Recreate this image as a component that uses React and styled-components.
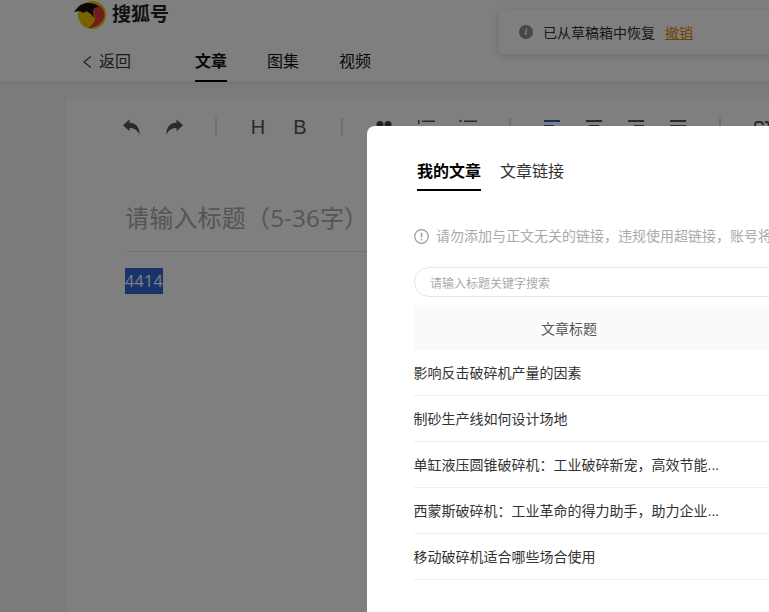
import styled, { createGlobalStyle } from "styled-components";

const Global = createGlobalStyle`
  html, body {
    margin: 0;
    height: 100%;
    overflow: hidden;
    font-family: "Liberation Sans", Arial, "Noto Sans CJK SC", sans-serif;
  }
  #root { height: 100%; }
`;

const Page = styled.div`
  position: relative;
  width: 769px;
  height: 612px;
  overflow: hidden;
  background: #f7f7f7;
`;

const Header = styled.header`
  height: 82px;
  background: #fff;
  border-bottom: 1px solid #f0f0f0;
  box-shadow: 0 2px 8px rgba(0, 0, 0, 0.05);
  box-sizing: border-box;
  padding-left: 74px;
`;

const Logo = styled.div`
  display: flex;
  align-items: center;
  gap: 5px;
  height: 30px;
`;

const LogoText = styled.span`
  font-size: 19px;
  line-height: 30px;
  font-weight: 700;
  color: #222;
`;

const Nav = styled.nav`
  display: flex;
  align-items: flex-start;
  margin-top: 20px;
  padding-left: 9px;
`;

const Back = styled.span`
  display: flex;
  align-items: center;
  gap: 7px;
  width: 112px;
  font-size: 16px;
  line-height: 24px;
  color: #333;
`;

const NavItem = styled.span`
  box-sizing: border-box;
  height: 32px;
  margin-right: 40px;
  font-size: 16px;
  line-height: 24px;
  color: #111;
  font-weight: ${(p) => (p.$active ? 700 : 400)};
  border-bottom: ${(p) => (p.$active ? "2px solid #000" : "none")};
`;

const Toast = styled.div`
  position: absolute;
  top: 10px;
  left: 499px;
  width: 320px;
  height: 44px;
  display: flex;
  align-items: center;
  padding-left: 20px;
  gap: 10px;
  background: #fff;
  border-radius: 4px;
  box-shadow: 0 2px 8px rgba(0, 0, 0, 0.15);
  font-size: 14px;
  color: #333;
`;

const ToastIcon = styled.span`
  width: 14px;
  height: 14px;
  border-radius: 50%;
  background: #8b8f9c;
  color: #fff;
  font: italic 700 10px/14px "Liberation Serif", serif;
  text-align: center;
`;

const Undo = styled.span`
  color: #e08a00;
  text-decoration: underline;
`;

const Editor = styled.main`
  box-sizing: border-box;
  width: 860px;
  height: 520px;
  margin: 16px 0 0 65px;
  background: #fff;
  border-left: 1px solid #f3f3f3;
  border-top: 1px solid #f3f3f3;
`;

const Toolbar = styled.div`
  display: flex;
  align-items: center;
  height: 56px;
  padding-left: 45px;
`;

const Tool = styled.span`
  flex: none;
  width: 42px;
  height: 20px;
  display: flex;
  align-items: center;
  justify-content: center;
  font-size: 20px;
  color: ${(p) => (p.$blue ? "#2060c0" : "#555")};
`;

const Separator = styled.span`
  flex: none;
  width: 2px;
  height: 18px;
  margin: 0 20px;
  background: #ddd;
`;

const Content = styled.div`
  width: 640px;
  margin: 20px 0 0 59px;
`;

const TitleRow = styled.div`
  box-sizing: border-box;
  height: 77px;
  padding-top: 23px;
  border-bottom: 1px solid #e8e8e8;
  font-family: "Open Sans", "Noto Sans CJK SC", sans-serif;
  font-size: 24px;
  letter-spacing: 0.2px;
  line-height: 40px;
  color: #aaa;
  white-space: nowrap;
`;

const Selected = styled.div`
  display: inline-block;
  margin-top: 16px;
  font-family: "Open Sans", sans-serif;
  font-size: 16px;
  letter-spacing: 0.35px;
  line-height: 26px;
  color: #fff;
  background: #3367d6;
`;

const Overlay = styled.div`
  position: absolute;
  inset: 0;
  background: rgba(0, 0, 0, 0.5);
`;

const Modal = styled.section`
  position: absolute;
  top: 126px;
  left: 367px;
  width: 640px;
  height: 520px;
  box-sizing: border-box;
  padding: 0 47px;
  background: #fff;
  border-radius: 8px;
`;

const Tabs = styled.div`
  display: flex;
  gap: 19px;
  height: 65px;
  padding: 34px 3px 0;
  box-sizing: border-box;
`;

const Tab = styled.span`
  box-sizing: border-box;
  height: 31px;
  font-size: 16px;
  line-height: 24px;
  color: ${(p) => (p.$active ? "#000" : "#333")};
  font-weight: ${(p) => (p.$active ? 700 : 400)};
  border-bottom: ${(p) => (p.$active ? "2px solid #000" : "none")};
`;

const Notice = styled.div`
  display: flex;
  align-items: center;
  gap: 7px;
  margin-top: 34px;
  font-size: 14px;
  line-height: 22px;
  color: #aaa;
  white-space: nowrap;
`;

const Search = styled.div`
  box-sizing: border-box;
  height: 30px;
  margin-top: 20px;
  padding-left: 15px;
  border: 1px solid #e5e5e5;
  border-radius: 15px;
  font-size: 12px;
  line-height: 32px;
  color: #aaa;
`;

const TableHead = styled.div`
  height: 43px;
  margin-top: 10px;
  padding-left: 127px;
  background: #fafafa;
  font-size: 14px;
  line-height: 45px;
  color: #555;
`;

const Row = styled.div`
  height: 46px;
  box-sizing: border-box;
  border-bottom: 1px solid #eee;
  font-size: 14px;
  line-height: 47px;
  text-indent: -0.5px;
  color: #333;
`;

const Chevron = () => (
  <svg width="9" height="12" viewBox="0 0 9 12" fill="none">
    <path d="M7.800 0.500 1 6l6.800 5.500" stroke="#444" strokeWidth="1.200" />
  </svg>
);

const InfoCircle = () => (
  <svg width="15" height="15" viewBox="0 0 15 15" fill="none">
    <circle cx="7.500" cy="7.500" r="6.800" stroke="#999" strokeWidth="1.200" />
    <path d="M7.500 3.800v4.600" stroke="#999" strokeWidth="1.500" />
    <circle cx="7.500" cy="10.600" r="0.900" fill="#999" />
  </svg>
);

const FoxLogo = () => (
  <svg width="33" height="30" viewBox="0 0 33 30">
    <circle cx="18" cy="15" r="14" fill="#f2c200" />
    <path d="M19 9c3-2 6-3 7-3 4 3 6 9 3 14-3 5-9 8-15 8 4-3 7-6 7-10 0-3-2-6-2-9z" fill="#e03a3a" />
    <path d="M0 12c1-2 3-3 4-5 3-3 7-4 10-4 5 0 9 1 11 4-3 0-5 1-6 3 0 3 1 5 1 8-2-3-4-5-6-6-2-1-3 0-5 1-1-2-6-2-9-1z" fill="#111" />
  </svg>
);

const Arrow = ({ flip }) => (
  <svg width="18" height="17" viewBox="0 0 18 17" style={flip ? { transform: "scaleX(-1)" } : undefined}>
    <path d="M0 6.200 6.500 0.500v3.300c6 0 10.500 4.400 10 12.200C15 11.500 11.500 9 6.500 9v3.200z" fill="#555" />
  </svg>
);

const Dots = () => (
  <svg width="16" height="16" viewBox="0 0 16 16" fill="#444">
    <circle cx="4" cy="5.500" r="3.500" />
    <circle cx="12" cy="5.500" r="3.500" />
  </svg>
);

const AlignLines = ({ align }) => {
  const x = { left: 0, center: 3, right: 6, full: 0 }[align];
  const w = align === "full" ? 16 : 10;
  return (
    <svg width="16" height="16" viewBox="0 0 16 16" fill="currentColor">
      <rect y="1" width="16" height="2" />
      <rect x={x} y="6" width={w} height="2" />
      <rect y="11" width="16" height="2" />
    </svg>
  );
};

const ListIcon = ({ dotted }) => (
  <svg width="18" height="16" viewBox="0 0 18 16" fill="#555">
    {dotted ? <circle cx="1.500" cy="2" r="1.200" /> : <rect x="1" y="1" width="1.500" height="4" />}
    <rect x="5" y="1.500" width="13" height="1.500" />
    <rect x="5" y="7" width="13" height="1.500" />
  </svg>
);

const LinkIcon = () => (
  <svg width="18" height="16" viewBox="0 0 18 16" fill="none" stroke="#555" strokeWidth="2">
    <path d="M2 8V6a3 3 0 0 1 3-3h2a3 3 0 0 1 3 3M16 8V6a3 3 0 0 0-3-3h-1" />
  </svg>
);

const titles = [
  "影响反击破碎机产量的因素",
  "制砂生产线如何设计场地",
  "单缸液压圆锥破碎机：工业破碎新宠，高效节能...",
  "西蒙斯破碎机：工业革命的得力助手，助力企业...",
  "移动破碎机适合哪些场合使用",
];

export default function App() {
  return (
    <Page>
      <Global />
      <Header>
        <Logo>
          <FoxLogo />
          <LogoText>搜狐号</LogoText>
        </Logo>
        <Nav>
          <Back>
            <Chevron />
            返回
          </Back>
          <NavItem $active>文章</NavItem>
          <NavItem>图集</NavItem>
          <NavItem>视频</NavItem>
        </Nav>
      </Header>
      <Toast>
        <ToastIcon>i</ToastIcon>
        <span>已从草稿箱中恢复</span>
        <Undo>撤销</Undo>
      </Toast>
      <Editor>
        <Toolbar>
          <Tool><Arrow /></Tool>
          <Tool><Arrow flip /></Tool>
          <Separator />
          <Tool>H</Tool>
          <Tool>B</Tool>
          <Separator />
          <Tool><Dots /></Tool>
          <Tool><ListIcon /></Tool>
          <Tool><ListIcon dotted /></Tool>
          <Separator />
          <Tool $blue><AlignLines align="left" /></Tool>
          <Tool><AlignLines align="center" /></Tool>
          <Tool><AlignLines align="right" /></Tool>
          <Tool><AlignLines align="full" /></Tool>
          <Separator />
          <Tool><LinkIcon /></Tool>
        </Toolbar>
        <Content>
          <TitleRow>请输入标题（5-36字）</TitleRow>
          <Selected>4414</Selected>
        </Content>
      </Editor>
      <Overlay />
      <Modal>
        <Tabs>
          <Tab $active>我的文章</Tab>
          <Tab>文章链接</Tab>
        </Tabs>
        <Notice>
          <InfoCircle />
          请勿添加与正文无关的链接，违规使用超链接，账号将受到处罚
        </Notice>
        <Search>请输入标题关键字搜索</Search>
        <TableHead>文章标题</TableHead>
        {titles.map((t) => (
          <Row key={t}>{t}</Row>
        ))}
      </Modal>
    </Page>
  );
}
